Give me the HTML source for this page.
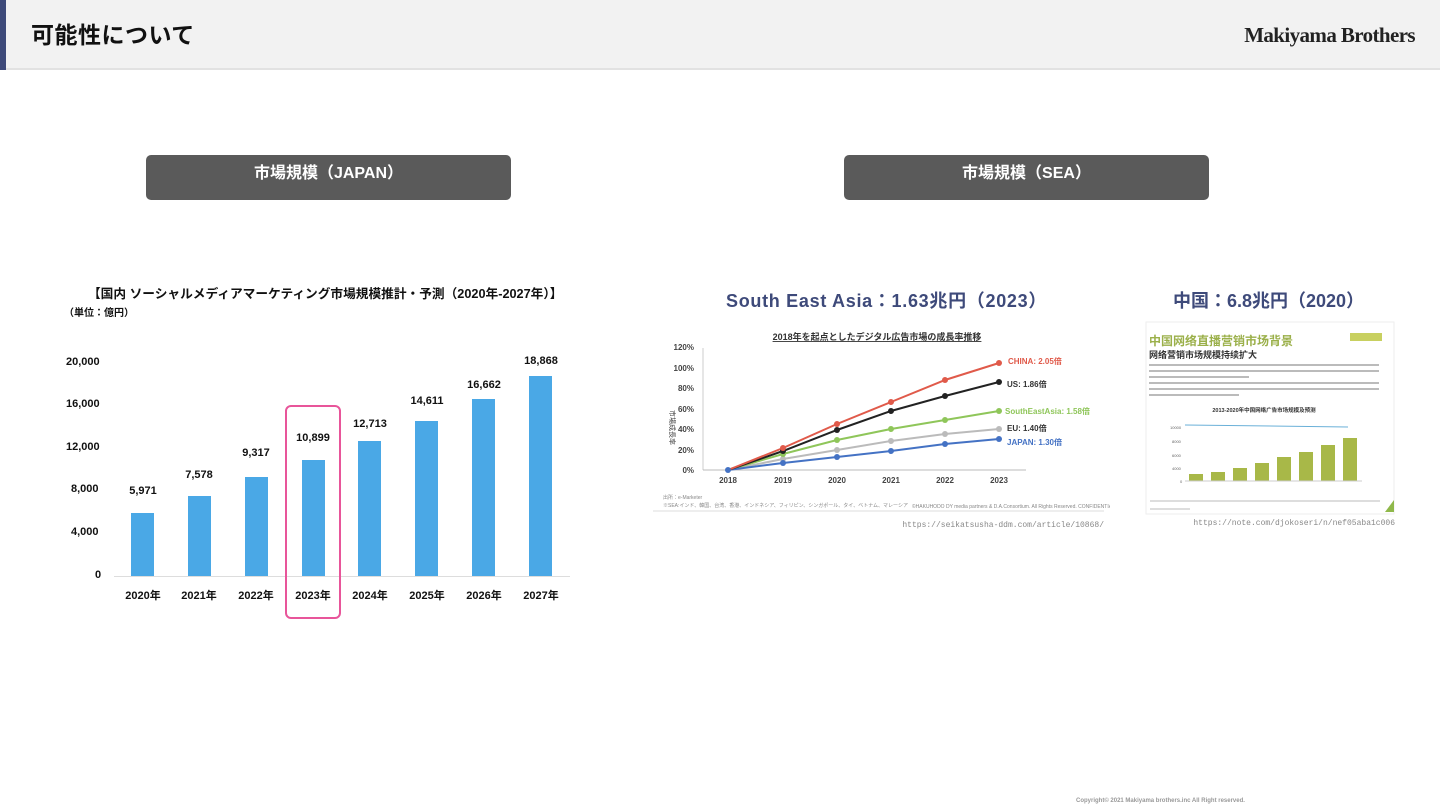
<!DOCTYPE html>
<html><head><meta charset="utf-8"><style>
*{margin:0;padding:0;box-sizing:border-box}
body{width:1440px;height:810px;background:#fff;position:relative;overflow:hidden;font-family:"Liberation Sans","Noto Sans CJK JP",sans-serif}
.hdr{position:absolute;left:0;top:0;width:1440px;height:70px;background:#f2f2f2;border-bottom:2px solid #e2e2e2}
.hdr .bar{position:absolute;left:0;top:0;width:6px;height:70px;background:#3e4a7a}
.hdr h1{position:absolute;left:31px;top:20px;font-size:23px;line-height:30px;font-weight:bold;color:#111;letter-spacing:0.5px}
.logo{position:absolute;right:25px;top:23px;font-family:"Liberation Serif",serif;font-size:21px;font-weight:bold;color:#222;letter-spacing:-0.6px}
.pill{position:absolute;top:155px;width:365px;height:45px;background:#5a5a5a;border-radius:5px;color:#fff;font-weight:bold;font-size:16px;text-align:center;line-height:38px}
.t{position:absolute;white-space:nowrap;font-weight:bold;color:#111}
.b{position:absolute;width:23px;background:#4aa8e6}
.lbl{position:absolute;font-size:11px;font-weight:bold;color:#111;white-space:nowrap;text-align:center;width:60px}
</style></head><body>
<div class="hdr"><div class="bar"></div><h1>可能性について</h1><div class="logo">Makiyama Brothers</div></div>
<div class="pill" style="left:146px">市場規模（JAPAN）</div>
<div class="pill" style="left:844px">市場規模（SEA）</div>

<div class="t" style="left:88px;top:283px;font-size:12.7px">【国内 ソーシャルメディアマーケティング市場規模推計・予測（2020年-2027年）】</div>
<div class="t" style="left:64px;top:304px;font-size:10px">（単位：億円）</div>
<div class="t" style="left:66px;top:356px;font-size:11px">20,000</div>
<div class="t" style="left:66px;top:398px;font-size:11px">16,000</div>
<div class="t" style="left:66px;top:441px;font-size:11px">12,000</div>
<div class="t" style="left:71px;top:483px;font-size:11px">8,000</div>
<div class="t" style="left:71px;top:526px;font-size:11px">4,000</div>
<div class="t" style="left:95px;top:569px;font-size:11px">0</div>
<div style="position:absolute;left:114px;top:576px;width:456px;height:1px;background:#ddd"></div>
<div class="b" style="left:131px;top:513px;height:63px"></div>
<div class="b" style="left:188px;top:496px;height:80px"></div>
<div class="b" style="left:245px;top:477px;height:99px"></div>
<div class="b" style="left:302px;top:460px;height:116px"></div>
<div class="b" style="left:358px;top:441px;height:135px"></div>
<div class="b" style="left:415px;top:421px;height:155px"></div>
<div class="b" style="left:472px;top:399px;height:177px"></div>
<div class="b" style="left:529px;top:376px;height:200px"></div>
<div class="lbl" style="left:113px;top:485px">5,971</div>
<div class="lbl" style="left:169px;top:469px">7,578</div>
<div class="lbl" style="left:226px;top:447px">9,317</div>
<div class="lbl" style="left:283px;top:432px">10,899</div>
<div class="lbl" style="left:340px;top:418px">12,713</div>
<div class="lbl" style="left:397px;top:395px">14,611</div>
<div class="lbl" style="left:454px;top:379px">16,662</div>
<div class="lbl" style="left:511px;top:355px">18,868</div>
<div class="lbl" style="left:113px;top:587px">2020年</div>
<div class="lbl" style="left:169px;top:587px">2021年</div>
<div class="lbl" style="left:226px;top:587px">2022年</div>
<div class="lbl" style="left:283px;top:587px">2023年</div>
<div class="lbl" style="left:340px;top:587px">2024年</div>
<div class="lbl" style="left:397px;top:587px">2025年</div>
<div class="lbl" style="left:454px;top:587px">2026年</div>
<div class="lbl" style="left:511px;top:587px">2027年</div>
<div style="position:absolute;left:285px;top:405px;width:56px;height:214px;border:2px solid #e8559a;border-radius:6px"></div>

<div class="t" style="left:726px;top:287px;font-size:18px;letter-spacing:0.7px;color:#3e4a7a">South East Asia：1.63兆円（2023）</div>
<div class="t" style="left:1173px;top:287px;font-size:18px;color:#3e4a7a">中国：6.8兆円（2020）</div>

<svg style="position:absolute;left:650px;top:320px" width="460" height="215" font-family="Liberation Sans, Noto Sans CJK JP, sans-serif">
<g transform="translate(-650,-320)">
<text x="877" y="340" font-size="9" font-weight="bold" text-anchor="middle" fill="#333" text-decoration="underline">2018年を起点としたデジタル広告市場の成長率推移</text>
<line x1="703" y1="348" x2="703" y2="470" stroke="#ccc"/>
<line x1="703" y1="470" x2="1026" y2="470" stroke="#bbb"/>
<g font-size="8" font-weight="bold" fill="#444" text-anchor="end">
<text x="694" y="350">120%</text><text x="694" y="371">100%</text><text x="694" y="391">80%</text><text x="694" y="412">60%</text><text x="694" y="432">40%</text><text x="694" y="453">20%</text><text x="694" y="473">0%</text></g>
<text x="670" y="410" font-size="7" fill="#444" transform="rotate(90 670 410)">市場成長率</text>
<g font-size="8" font-weight="bold" fill="#444" text-anchor="middle">
<text x="728" y="483">2018</text><text x="783" y="483">2019</text><text x="837" y="483">2020</text><text x="891" y="483">2021</text><text x="945" y="483">2022</text><text x="999" y="483">2023</text></g>
<g fill="none" stroke-width="2">
<polyline stroke="#bbb" points="728,470 783,459 837,450 891,441 945,434 999,429"/>
<polyline stroke="#8fc65a" points="728,470 783,454 837,440 891,429 945,420 999,411"/>
<polyline stroke="#4472c4" points="728,470 783,463 837,457 891,451 945,444 999,439"/>
<polyline stroke="#222" points="728,470 783,451 837,430 891,411 945,396 999,382"/>
<polyline stroke="#e05a4a" points="728,470 783,448 837,424 891,402 945,380 999,363"/>
</g>
<g fill="#bbb"><circle cx="783" cy="459" r="3"/><circle cx="837" cy="450" r="3"/><circle cx="891" cy="441" r="3"/><circle cx="945" cy="434" r="3"/><circle cx="999" cy="429" r="3"/></g>
<g fill="#8fc65a"><circle cx="783" cy="454" r="3"/><circle cx="837" cy="440" r="3"/><circle cx="891" cy="429" r="3"/><circle cx="945" cy="420" r="3"/><circle cx="999" cy="411" r="3"/></g>
<g fill="#4472c4"><circle cx="728" cy="470" r="3"/><circle cx="783" cy="463" r="3"/><circle cx="837" cy="457" r="3"/><circle cx="891" cy="451" r="3"/><circle cx="945" cy="444" r="3"/><circle cx="999" cy="439" r="3"/></g>
<g fill="#222"><circle cx="783" cy="451" r="3"/><circle cx="837" cy="430" r="3"/><circle cx="891" cy="411" r="3"/><circle cx="945" cy="396" r="3"/><circle cx="999" cy="382" r="3"/></g>
<g fill="#e05a4a"><circle cx="783" cy="448" r="3"/><circle cx="837" cy="424" r="3"/><circle cx="891" cy="402" r="3"/><circle cx="945" cy="380" r="3"/><circle cx="999" cy="363" r="3"/></g>
<g font-size="8" font-weight="bold">
<text x="1008" y="364" fill="#e05a4a">CHINA: 2.05倍</text>
<text x="1007" y="387" fill="#333">US: 1.86倍</text>
<text x="1005" y="414" fill="#8fc65a">SouthEastAsia: 1.58倍</text>
<text x="1007" y="431" fill="#333">EU: 1.40倍</text>
<text x="1007" y="445" fill="#4472c4">JAPAN: 1.30倍</text></g>
<text x="663" y="499" font-size="5" fill="#888">出所：e-Marketer</text>
<text x="663" y="507" font-size="5" fill="#888">※SEA:インド、韓国、台湾、香港、インドネシア、フィリピン、シンガポール、タイ、ベトナム、マレーシア</text>
<text x="912" y="508" font-size="5" fill="#888">©HAKUHODO DY media partners &amp; D.A.Consortium. All Rights Reserved. CONFIDENTIAL</text>
<line x1="653" y1="511" x2="1104" y2="511" stroke="#ddd"/>
<text x="1104" y="527" font-size="8" fill="#888" text-anchor="end" font-family="Liberation Mono, monospace">https://seikatsusha-ddm.com/article/10868/</text>
</g></svg>

<svg style="position:absolute;left:1140px;top:320px" width="260" height="215" font-family="Liberation Sans, Noto Sans CJK SC, sans-serif">
<g transform="translate(-1140,-320)">
<rect x="1146" y="322" width="248" height="192" fill="#fff" stroke="#eee"/>
<text x="1149" y="345" font-size="12" font-weight="bold" fill="#9bb04a">中国网络直播营销市场背景</text>
<rect x="1350" y="333" width="32" height="8" fill="#c8d060"/>
<text x="1149" y="358" font-size="9" font-weight="bold" fill="#333">网络营销市场规模持续扩大</text>
<g fill="#bbb"><rect x="1149" y="364" width="230" height="2"/><rect x="1149" y="370" width="230" height="2"/><rect x="1149" y="376" width="100" height="2"/><rect x="1149" y="382" width="230" height="2"/><rect x="1149" y="388" width="230" height="2"/><rect x="1149" y="394" width="90" height="2"/></g>
<text x="1264" y="412" font-size="5.5" font-weight="bold" fill="#333" text-anchor="middle">2013-2020年中国网络广告市场规模及预测</text>
<line x1="1185" y1="425" x2="1348" y2="427" stroke="#6ab0d8"/>
<g fill="#a8b848">
<rect x="1189" y="474" width="14" height="7"/><rect x="1211" y="472" width="14" height="9"/><rect x="1233" y="468" width="14" height="13"/><rect x="1255" y="463" width="14" height="18"/><rect x="1277" y="457" width="14" height="24"/><rect x="1299" y="452" width="14" height="29"/><rect x="1321" y="445" width="14" height="36"/><rect x="1343" y="438" width="14" height="43"/></g>
<line x1="1185" y1="481" x2="1362" y2="481" stroke="#ccc"/>
<g font-size="4" fill="#666"><text x="1170" y="429">10000</text><text x="1172" y="443">8000</text><text x="1172" y="457">6000</text><text x="1172" y="470">4000</text><text x="1180" y="483">0</text></g>
<rect x="1150" y="500" width="230" height="2" fill="#ddd"/>
<rect x="1150" y="508" width="40" height="2" fill="#ddd"/>
<polygon points="1385,512 1394,500 1394,512" fill="#8fb84a"/>
<text x="1395" y="525" font-size="8" fill="#888" text-anchor="end" font-family="Liberation Mono, monospace">https://note.com/djokoseri/n/nef05aba1c006</text>
</g></svg>

<div style="position:absolute;left:1076px;top:798px;font-size:6px;color:#999;font-weight:bold">Copyright© 2021 Makiyama brothers.inc All Right reserved.</div>
</body></html>
